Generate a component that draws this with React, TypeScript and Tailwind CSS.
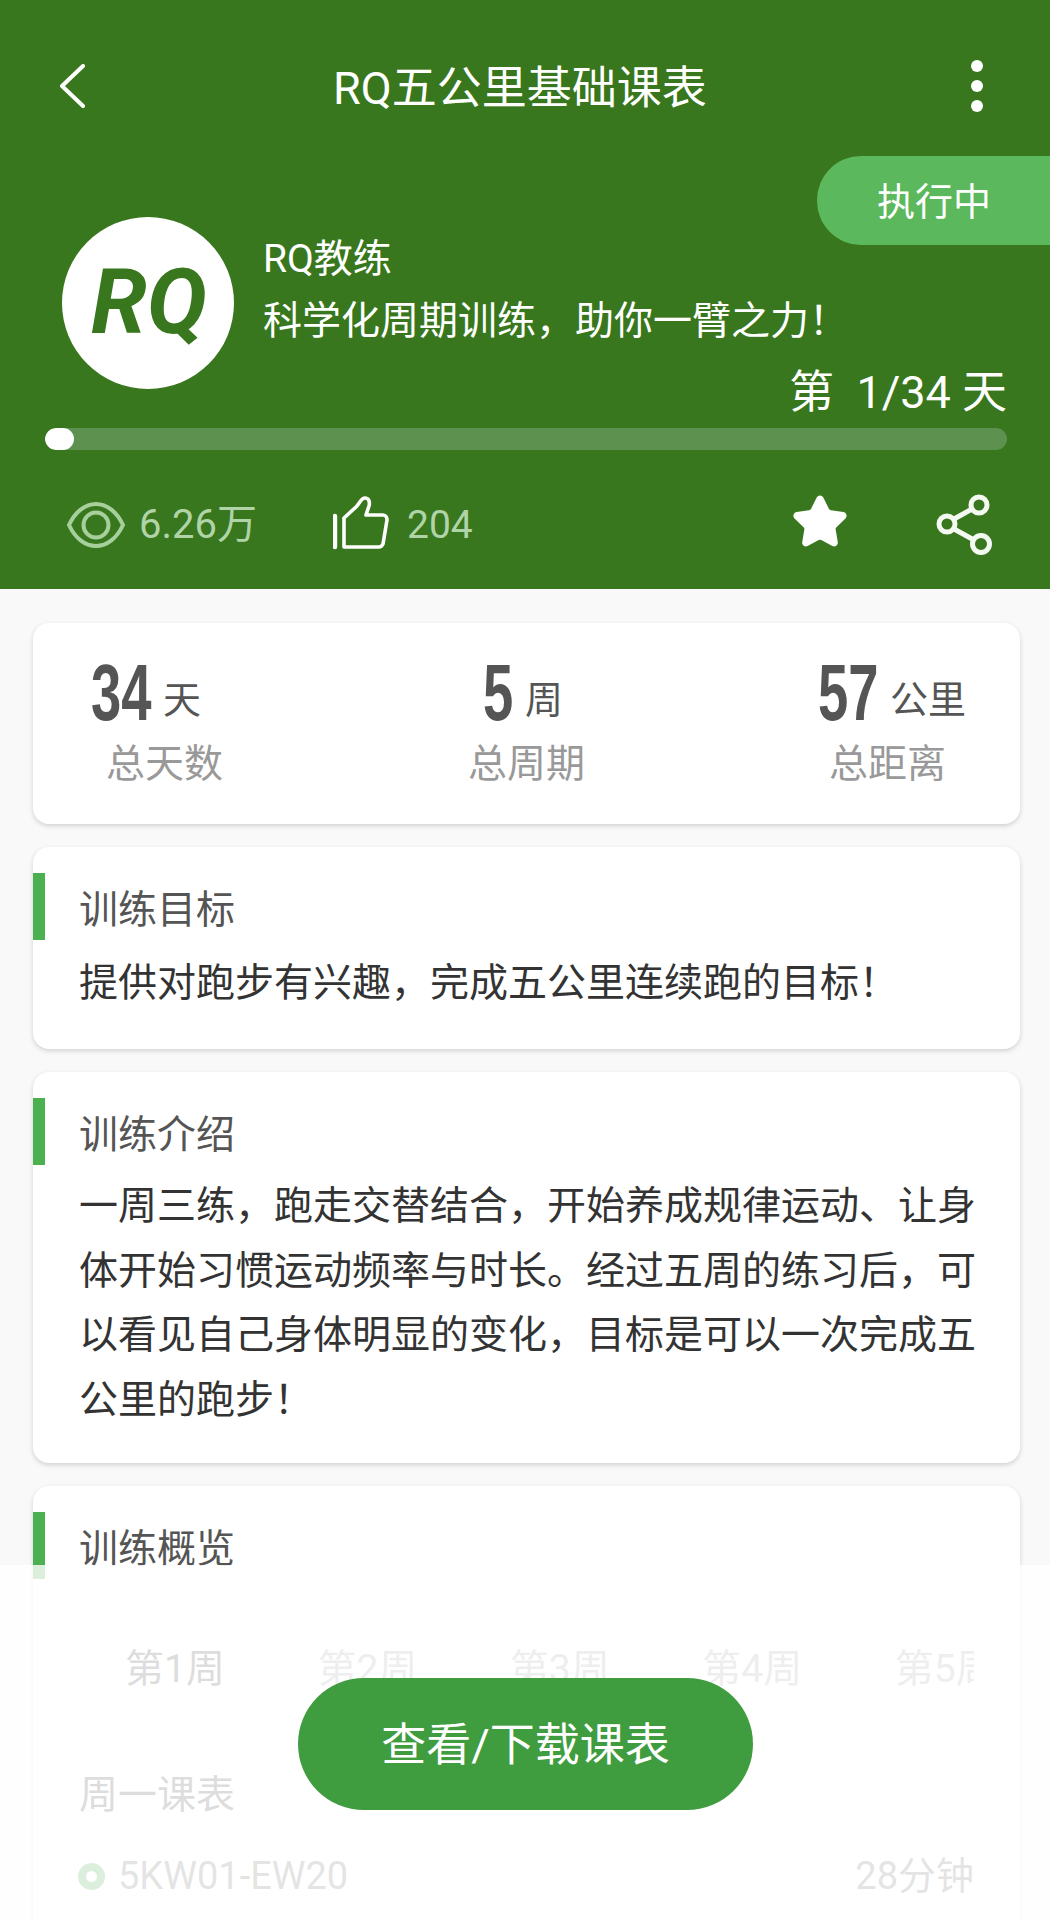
import { Star } from 'lucide-react'

const fontStack = { fontFamily: 'Roboto, "Noto Sans CJK SC", sans-serif' }

function Back() {
  return (
    <svg width="26" height="44" viewBox="0 0 26 44" fill="none" stroke="white" strokeWidth="4" strokeLinecap="round" strokeLinejoin="round">
      <polyline points="24,2 3,22 24,42" />
    </svg>
  )
}

function Dots() {
  return (
    <svg width="14" height="54" viewBox="0 0 14 54" fill="white">
      <circle cx="7" cy="7" r="6" />
      <circle cx="7" cy="27" r="6" />
      <circle cx="7" cy="47" r="6" />
    </svg>
  )
}

function Eye() {
  return (
    <svg width="58" height="46" viewBox="0 0 58 46" fill="none" stroke="#a6cf9c" strokeWidth="4">
      <path d="M2 23C8 10 18 2 29 2s21 8 27 21c-6 13-16 21-27 21S8 36 2 23Z" />
      <circle cx="29" cy="23" r="12.5" />
    </svg>
  )
}

function Thumb() {
  return (
    <svg width="56" height="54" viewBox="0 0 56 54" fill="none" stroke="white" strokeWidth="3.6" strokeLinecap="round" strokeLinejoin="round">
      <path d="M2 20V51" strokeWidth="4.4" />
      <path d="M11 51V22L23 11C27 7 28 2 32 2c4 0 5 4 4 8l-3 9H50c3 0 4 3 4 5l-4 24c-1 2-2 3-4 3Z" />
    </svg>
  )
}

function Share() {
  return (
    <svg width="56" height="62" viewBox="0 0 56 62" fill="none" stroke="#f4f9f2" strokeWidth="5">
      <circle cx="43" cy="11" r="8" />
      <circle cx="11" cy="30" r="8" />
      <circle cx="45" cy="50" r="8.5" />
      <path d="M18 25 36 15M18 35 38 46" />
    </svg>
  )
}

function Stat({ num, unit, label, numWidth, numOffset, labelOffset, className }: { num: string; unit: string; label: string; numWidth: string; numOffset: string; labelOffset: string; className?: string }) {
  return (
    <div className={`flex flex-col ${className ?? ''}`}>
      <div className={`flex items-end h-[64px] text-[#555] ${numOffset}`}>
        <div className={`${numWidth} h-[64px]`}>
          <span className="block w-max text-[80px] leading-[64px] font-bold origin-left scale-x-[0.68]" style={{ fontFamily: '"Liberation Sans", sans-serif' }}>
            {num}
          </span>
        </div>
        <span className="text-[38px] leading-[50px] ml-[12px] whitespace-nowrap">{unit}</span>
      </div>
      <div className={`text-[39px] leading-[50px] mt-[14px] text-[#999] whitespace-nowrap ${labelOffset}`}>{label}</div>
    </div>
  )
}

function SectionCard({ title, children, className }: { title: string; children?: React.ReactNode; className?: string }) {
  return (
    <section className={`bg-white rounded-[16px] shadow-[0_2px_5px_rgba(0,0,0,0.16)] pt-[26px] ${className ?? ''}`}>
      <div className="border-l-[12px] border-[#4caf50] h-[67px] flex items-center pl-[34px] text-[39px] text-[#555] pt-[7px]">{title}</div>
      {children}
    </section>
  )
}

export default function App() {
  const weeks = ['第1周', '第2周', '第3周', '第4周', '第5周']

  return (
    <div className="relative w-[1050px] h-[1920px] overflow-hidden bg-[#f9f9f9]" style={fontStack}>
      <header className="h-[589px] bg-[#38771d] text-white flex flex-col">
        <div className="relative h-[172px] flex items-center justify-between pl-[59px] pr-[66px]">
          <Back />
          <h1 className="text-[45px] font-normal absolute left-[333px] top-[59px] leading-[60px] whitespace-nowrap">RQ五公里基础课表</h1>
          <Dots />
        </div>

        <div className="flex mt-[45px] pl-[62px]">
          <div className="w-[172px] h-[172px] rounded-full bg-white flex items-center justify-center shrink-0">
            <span className="text-[#38771d] text-[90px] font-bold italic leading-none ml-[2px]">RQ</span>
          </div>
          <div className="flex-1 ml-[29px] mt-[17px] pr-[43px] text-[39px]">
            <div className="h-[50px] leading-[50px]">RQ教练</div>
            <div className="h-[50px] leading-[50px] mt-[12px]">科学化周期训练，助你一臂之力！</div>
            <div className="h-[50px] leading-[50px] mt-[22px] text-right text-[45px] whitespace-pre">第  1/34 天</div>
          </div>
        </div>

        <div className="ml-[45px] mr-[43px] mt-[10px] h-[22px] rounded-full bg-[#5c9150] overflow-hidden">
          <div className="w-[29px] h-full rounded-full bg-white" />
        </div>

        <div className="flex items-center h-[60px] mt-[45px] pl-[67px] pr-[58px]">
          <Eye />
          <span className="ml-[14px] text-[40px] text-[#b0d4a8]">6.26万</span>
          <div className="ml-[76px] -mt-[4px]">
            <Thumb />
          </div>
          <span className="ml-[18px] text-[39px] text-[#b0d4a8]">204</span>
          <Star className="ml-auto w-[58px] h-[58px] -mt-[6px]" fill="white" stroke="white" strokeWidth={2} />
          <div className="ml-[87px]">
            <Share />
          </div>
        </div>
      </header>

      <div className="absolute right-0 top-[156px] w-[233px] h-[89px] rounded-l-[44px] bg-[#5cb85c] text-white text-[38px] flex items-center pl-[60px] pt-[3px]">
        执行中
      </div>

      <main className="flex flex-col pl-[33px] pr-[30px] pt-[34px] gap-[23px]">
        <section className="bg-white rounded-[16px] shadow-[0_2px_5px_rgba(0,0,0,0.16)] h-[201px] flex pl-[58px] pt-[38px]">
          <Stat num="34" unit="天" label="总天数" numWidth="w-[60px]" numOffset="" labelOffset="ml-[15px]" />
          <Stat num="5" unit="周" label="总周期" numWidth="w-[30px]" numOffset="ml-[15px]" labelOffset="" className="ml-[245px]" />
          <Stat num="57" unit="公里" label="总距离" numWidth="w-[60px]" numOffset="" labelOffset="ml-[11px]" className="ml-[233px]" />
        </section>

        <SectionCard title="训练目标" className="h-[202px]">
          <p className="px-[46px] mt-[18px] text-[39px] leading-[50px] text-[#333]">提供对跑步有兴趣，完成五公里连续跑的目标！</p>
        </SectionCard>

        <SectionCard title="训练介绍" className="h-[391px]">
          <p className="pl-[46px] pr-[42px] mt-[9px] text-[39px] leading-[64.5px] text-[#333]">
            一周三练，跑走交替结合，开始养成规律运动、让身体开始习惯运动频率与时长。经过五周的练习后，可以看见自己身体明显的变化，目标是可以一次完成五公里的跑步！
          </p>
        </SectionCard>

        <SectionCard title="训练概览" className="h-[600px]">
          <div className="mx-[46px] mt-[65px] overflow-hidden">
            <div className="flex gap-[92.5px] pl-[46px] text-[39px] leading-[50px] whitespace-nowrap">
              {weeks.map((w, i) => (
                <span key={w} className={i === 0 ? 'text-[#555]' : 'text-[#aaa]'}>
                  {w}
                </span>
              ))}
            </div>
          </div>
          <div className="px-[46px] mt-[76px] text-[39px] leading-[50px] text-[#555]">周一课表</div>
          <div className="flex items-center px-[46px] mt-[31px] text-[38px] leading-[50px] text-[#777]">
            <span className="w-[27px] h-[27px] rounded-full border-[8px] border-[#4caf50] -ml-[1px] mr-[13px]" />
            <span>5KW01-EW20</span>
            <span className="ml-auto">28分钟</span>
          </div>
        </SectionCard>
      </main>

      <div className="absolute inset-x-0 top-[1565px] bottom-0 bg-white/80" />
      <button className="absolute left-[298px] top-[1678px] w-[455px] h-[132px] rounded-[66px] bg-[#3f9c3f] text-white text-[45px] flex items-center justify-center pt-[3px]">
        查看/下载课表
      </button>
    </div>
  )
}
